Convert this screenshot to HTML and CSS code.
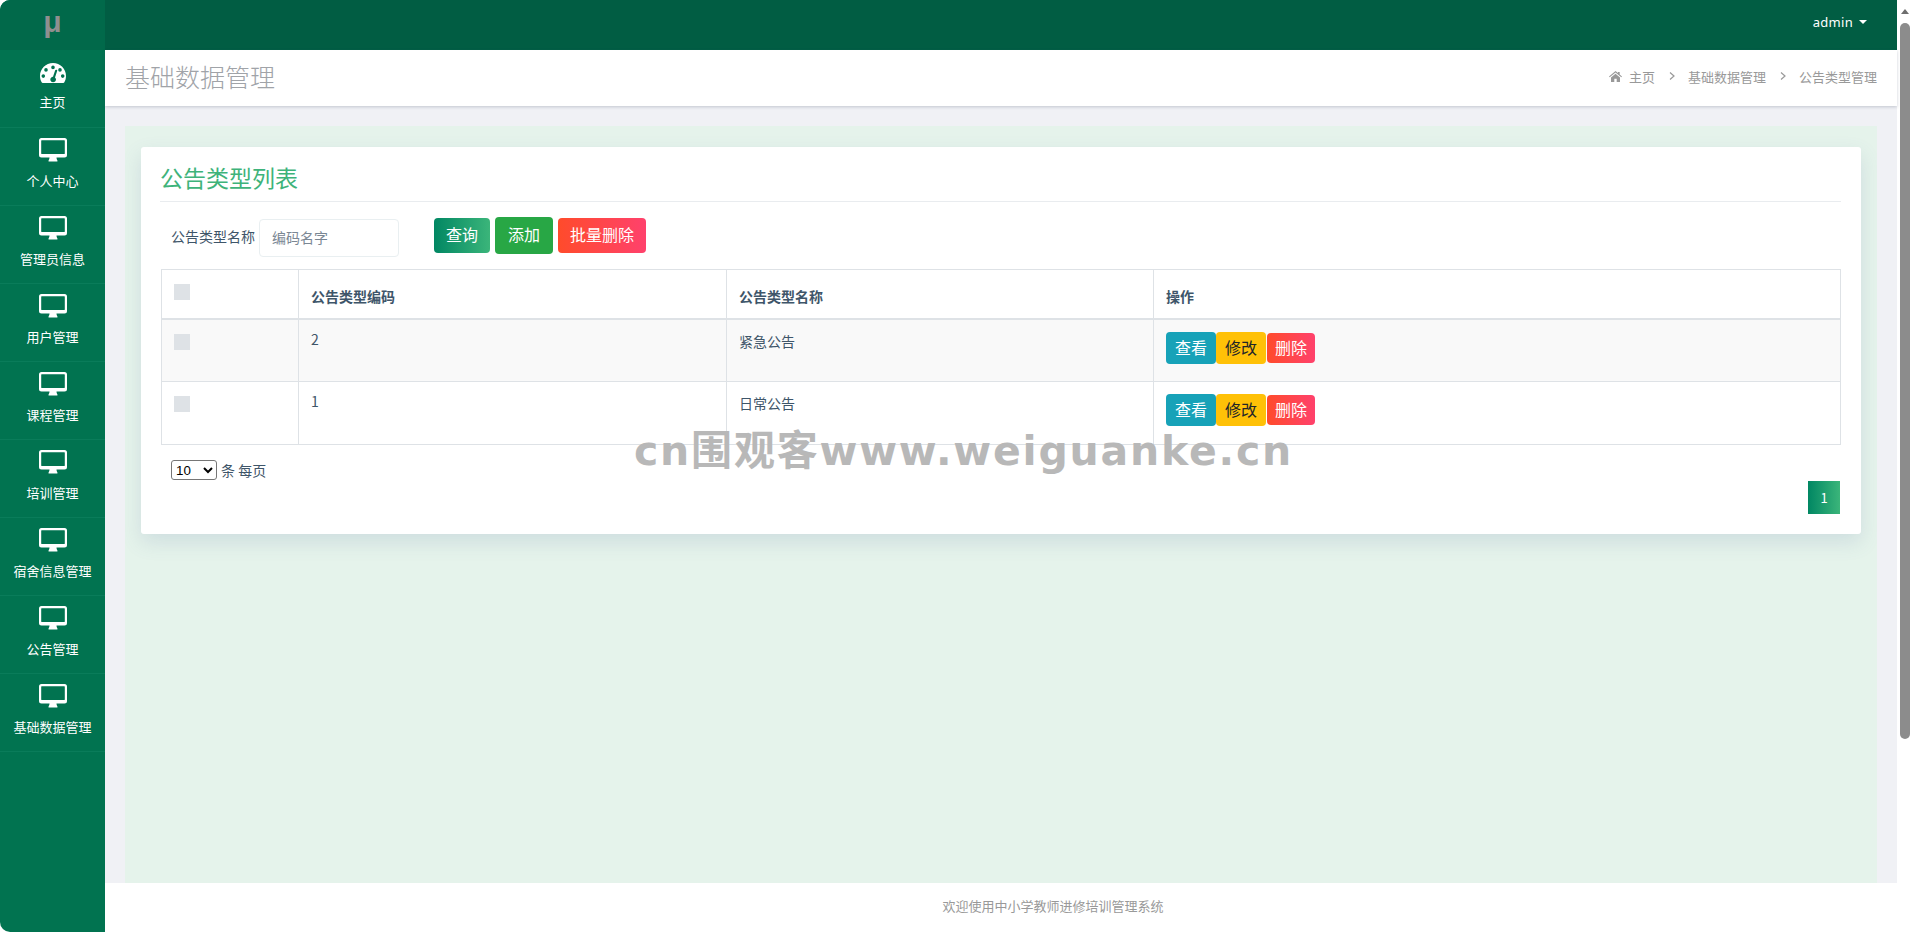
FILE: index.html
```html
<!DOCTYPE html>
<html lang="zh">
<head>
<meta charset="utf-8">
<title>公告类型管理</title>
<link rel="stylesheet" href="styles.css">
</head>
<body>
<svg class="defs" width="0" height="0" aria-hidden="true">
  <symbol id="desk" viewBox="0 0 28 24">
    <path fill-rule="evenodd" d="M2.5 0h23A2.5 2.5 0 0 1 28 2.500v14.500a2.500 2.500 0 0 1-2.500 2.500H17.500c0 1.300.6 2.400 1 3.300.2.500-.1.700-.6.700h-7.800c-.5 0-.8-.2-.6-.7.400-.9 1-2 1-3.300H2.500A2.500 2.500 0 0 1 0 17V2.500A2.500 2.500 0 0 1 2.500 0zM2.600 2.300a.4.400 0 0 0-.4.400v12.800c0 .2.200.4.400.4h22.800a.4.400 0 0 0 .4-.4V2.700a.4.400 0 0 0-.4-.4z"/>
  </symbol>
</svg>
<div class="app">
  <aside class="sidebar">
    <div class="logo">μ</div>
    <nav>
      <a class="nav-item">
        <svg class="ico gauge" viewBox="0 0 26 20"><path fill-rule="evenodd" d="M13 0C5.800 0 0 5.800 0 13c0 2.400.6 4.700 1.800 6.600.2.300.5.400.8.400h20.800c.3 0 .6-.1.800-.4C25.400 17.700 26 15.400 26 13 26 5.800 20.200 0 13 0zM13 2.600a1.800 1.800 0 1 1 0 3.600 1.800 1.800 0 0 1 0-3.600zM6 5.100a1.800 1.800 0 1 1 0 3.600 1.800 1.800 0 0 1 0-3.600zM20 5.100a1.800 1.800 0 1 1 0 3.600 1.800 1.800 0 0 1 0-3.600zM3.300 11.300a1.800 1.800 0 1 1 0 3.600 1.800 1.800 0 0 1 0-3.600zM22.700 11.300a1.800 1.800 0 1 1 0 3.600 1.800 1.800 0 0 1 0-3.600zM16.700 6.700c.4.100.7.600.5 1l-2.200 6.800c.7.500 1 1.300 1 2.100 0 1.500-1.300 2.700-2.900 2.700s-2.800-1.200-2.800-2.700c0-1.500 1.200-2.700 2.700-2.800l2.200-6.500c.2-.4.600-.7 1-.6z"/></svg>
        <span>主页</span>
      </a>
      <a class="nav-item"><svg class="ico"><use href="#desk"/></svg><span>个人中心</span></a>
      <a class="nav-item"><svg class="ico"><use href="#desk"/></svg><span>管理员信息</span></a>
      <a class="nav-item"><svg class="ico"><use href="#desk"/></svg><span>用户管理</span></a>
      <a class="nav-item"><svg class="ico"><use href="#desk"/></svg><span>课程管理</span></a>
      <a class="nav-item"><svg class="ico"><use href="#desk"/></svg><span>培训管理</span></a>
      <a class="nav-item"><svg class="ico"><use href="#desk"/></svg><span>宿舍信息管理</span></a>
      <a class="nav-item"><svg class="ico"><use href="#desk"/></svg><span>公告管理</span></a>
      <a class="nav-item"><svg class="ico"><use href="#desk"/></svg><span>基础数据管理</span></a>
    </nav>
  </aside>
  <div class="main">
    <header class="topbar"><span class="user">admin</span><i class="caret"></i></header>
    <div class="pagehead">
      <h1>基础数据管理</h1>
      <div class="crumbs">
        <svg class="home" viewBox="0 0 13 11"><path d="M6.500 0 0 5.500l.7.800L6.500 1.500l5.800 4.800.7-.8-2.300-1.900V1h-1.700v1.100zM2 6.500V11h3.300V7.700h2.400V11H11V6.500L6.500 2.700z"/></svg>
        <span>主页</span>
        <svg class="chev" viewBox="0 0 6 8"><path d="M1 .5 5 4 1 7.500"/></svg>
        <span>基础数据管理</span>
        <svg class="chev" viewBox="0 0 6 8"><path d="M1 .5 5 4 1 7.500"/></svg>
        <span>公告类型管理</span>
      </div>
    </div>
    <main class="content">
      <div class="panel">
        <section class="card">
          <h2>公告类型列表</h2>
          <form class="filters">
            <label>公告类型名称</label>
            <input class="search" type="text" placeholder="编码名字">
            <button type="button" class="btn btn-query">查询</button>
            <button type="button" class="btn btn-add">添加</button>
            <button type="button" class="btn btn-del">批量删除</button>
          </form>
          <table class="grid">
            <thead>
              <tr>
                <th class="c1"><i class="check"></i></th>
                <th class="c2">公告类型编码</th>
                <th class="c3">公告类型名称</th>
                <th>操作</th>
              </tr>
            </thead>
            <tbody>
              <tr class="odd">
                <td><i class="check"></i></td>
                <td class="num">2</td>
                <td class="name">紧急公告</td>
                <td class="ops"><button type="button" class="op op-view">查看</button><button type="button" class="op op-edit">修改</button><button type="button" class="op op-del">删除</button></td>
              </tr>
              <tr class="even">
                <td><i class="check"></i></td>
                <td class="num">1</td>
                <td class="name">日常公告</td>
                <td class="ops"><button type="button" class="op op-view">查看</button><button type="button" class="op op-edit">修改</button><button type="button" class="op op-del">删除</button></td>
              </tr>
            </tbody>
          </table>
          <div class="length"><select><option>10</option></select> 条 每页</div>
          <div class="pager"><a class="page">1</a></div>
        </section>
      </div>
    </main>
    <footer class="foot">欢迎使用中小学教师进修培训管理系统</footer>
  </div>
  <div class="scrollbar"><i class="arrow"></i><div class="thumb"></div></div>
</div>
<div class="watermark">cn围观客www.weiguanke.cn</div>
</body>
</html>
```
FILE: styles.css
```css
* { box-sizing: border-box; }
html, body { margin: 0; height: 100%; overflow: hidden; }
body {
  font-family: "Noto Sans CJK SC", "Noto Sans", sans-serif;
  font-size: 14px;
  color: #3e5569;
  background: #fff;
  position: relative;
}
.defs { position: absolute; }
.app { display: flex; height: 932px; }

.sidebar {
  width: 105px;
  flex: none;
  background: #017350;
  border-radius: 10px 0 0 10px;
  overflow: hidden;
}
.logo {
  height: 50px;
  background: #01694a;
  color: #8f8f8f;
  font: bold 30px/44px "Liberation Sans", sans-serif;
  text-align: center;
}
.nav-item {
  display: flex;
  flex-direction: column;
  align-items: center;
  height: 78px;
  padding-top: 10px;
  border-bottom: 1px solid #0a7c5a;
  color: #fff;
  font-size: 13px;
  line-height: 20px;
}
.ico { width: 28px; height: 24px; fill: #fff; margin-bottom: 9px; flex: none; }
.gauge { width: 26px; height: 20px; margin: 3px 0 9px; }

.main { flex: 1; min-width: 0; display: flex; flex-direction: column; background: #f0f1f5; }
.topbar {
  height: 50px;
  flex: none;
  background: #015d43;
  display: flex;
  align-items: center;
  justify-content: flex-end;
  padding: 0 30px 6px 0;
  color: #fff;
  font-family: "Noto Sans", sans-serif;
  font-size: 13px;
  letter-spacing: .3px;
}
.caret {
  width: 0;
  height: 0;
  margin-left: 6px;
  border: 4px solid transparent;
  border-top-color: #fff;
  border-bottom: 0;
}
.pagehead {
  height: 56px;
  flex: none;
  background: #fff;
  box-shadow: 0 1px 3px rgba(60, 70, 100, .25);
  display: flex;
  align-items: center;
  justify-content: space-between;
  padding: 0 20px 4px;
  position: relative;
}
h1 { margin: 0; font-size: 25px; font-weight: 300; color: #a0a3a8; }
.crumbs { display: flex; align-items: center; color: #999; font-size: 13px; }
.home { width: 13px; height: 11px; fill: #999; margin-right: 7px; }
.chev { width: 6px; height: 8px; fill: none; stroke: #999; stroke-width: 1.200; margin: 0 13px 0 14px; }

.content { flex: 1; min-height: 0; display: flex; padding: 20px 20px 0; }
.panel { flex: 1; background: #e5f3eb; padding: 21px 16px 0; overflow: hidden; }
.card {
  height: 387px;
  background: #fff;
  border-radius: 3px;
  padding: 0 20px;
  box-shadow: 0 8px 20px rgba(90, 110, 160, .16);
}
h2 {
  margin: 0 0 0 -1px;
  height: 55px;
  border-bottom: 1px solid #e9ecef;
  color: #3eb37a;
  font-size: 23px;
  font-weight: 400;
  line-height: 61px;
}
.filters { display: flex; align-items: center; height: 67px; padding: 0 0 0 10px; }
.filters label { margin: 0 4px 0 0; }
.search {
  width: 140px;
  height: 38px;
  margin: 5px 35px 0 0;
  padding: 0 12px 2px;
  border: 1px solid #e9eff1;
  border-radius: 4px;
  font: inherit;
  color: #495057;
}
.search::placeholder { color: #7b8794; opacity: 1; }
.btn {
  height: 35px;
  border: 0;
  border-radius: 4px;
  color: #fff;
  font: 16px/1 "Noto Sans CJK SC", sans-serif;
  padding: 0 0 4px;
}
.btn-query { width: 56px; background: linear-gradient(90deg, #018763, #3bb57a); }
.btn-add { width: 58px; height: 37px; margin-left: 5px; background: #28a745; }
.btn-del { width: 88px; margin-left: 5px; background: linear-gradient(90deg, #ff4b2b, #ff416c); }

.grid { width: 100%; table-layout: fixed; border-collapse: collapse; }
.grid th, .grid td { border: 1px solid #dee2e6; padding: 11px 12px 0; vertical-align: top; text-align: left; font-size: 14px; line-height: 20px; }
.grid th { height: 49px; font-weight: 700; border-bottom-width: 2px; }
.grid th:not(.c1) { padding-top: 16px; }
.c1 { width: 137px; }
.c2 { width: 428px; }
.c3 { width: 427px; }
.odd { height: 63px; }
.even { height: 63px; }
.odd td { background: #f9f9f9; }
.grid .num { padding-top: 9px; }
.grid .name { padding-top: 11px; }
.check { display: block; width: 16px; height: 16px; margin-top: 3px; background: #dee2e6; }
.grid .ops { padding: 12px 12px 0; font-size: 0; }
.op { height: 32px; width: 50px; border: 0; border-radius: 4px; padding: 0 0 2px; font: 16px/1 "Noto Sans CJK SC", sans-serif; vertical-align: top; }
.op-view { background: #17a2b8; color: #fff; }
.op-edit { background: #ffc107; color: #212529; }
.op-del { width: 48px; height: 30px; margin: 1px 0 0 1px; background: linear-gradient(90deg, #ff4b2b, #ff416c); color: #fff; }

.length { margin: 15px 0 0 10px; height: 20px; line-height: 20px; display: flex; align-items: center; gap: 4px; }
.length select { width: 46px; height: 20px; font-size: 13.333px; font-family: "Liberation Sans", sans-serif; background: #fff; color: #000; border-radius: 3px; }
.pager { display: flex; justify-content: flex-end; margin: 1px 1px 0 0; }
.page {
  width: 32px;
  height: 33px;
  background: linear-gradient(90deg, #018763, #3bb57a);
  color: #fff;
  font-size: 13px;
  line-height: 33px;
  text-align: center;
}
.foot {
  height: 49px;
  flex: none;
  background: #fff;
  color: #999;
  font-size: 13px;
  line-height: 46px;
  text-align: center;
  padding-left: 104px;
}

.scrollbar { width: 15px; flex: none; background: #fff; display: flex; flex-direction: column; align-items: center; padding: 9px 2px 0 3px; }
.arrow { width: 0; height: 0; border: 4px solid transparent; border-bottom: 5px solid #6e6e6e; border-top: 0; margin-bottom: 9px; }
.thumb { width: 10px; height: 716px; background: #8c8c8c; border-radius: 5px; flex: none; }

.watermark {
  position: absolute;
  left: 634px;
  top: 421px;
  color: #b8b8b8;
  font: bold 41px/60px "DejaVu Sans", "Noto Sans CJK SC", sans-serif;
  letter-spacing: 1.800px;
  white-space: nowrap;
}
```
